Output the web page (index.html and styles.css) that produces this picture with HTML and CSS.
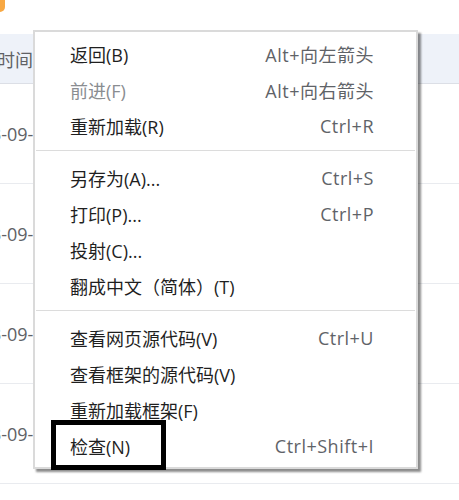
FILE: index.html
```html
<!DOCTYPE html>
<html lang="zh-CN">
<head>
<meta charset="utf-8">
<title>Context menu</title>
<link rel="stylesheet" href="styles.css">
</head>
<body>
<div class="page">
  <div class="topbar"><span class="badge"></span></div>
  <div class="table">
    <div class="thead"><span class="cell head-cell">提交时间</span></div>
    <div class="row"><span class="cell">2023-09-15 10:20</span></div>
    <div class="row"><span class="cell">2023-09-14 09:12</span></div>
    <div class="row"><span class="cell">2023-09-13 16:45</span></div>
    <div class="row"><span class="cell">2023-09-12 11:08</span></div>
  </div>

  <div class="menu">
    <div class="item"><span class="label">返回(B)</span><span class="key">Alt+向左箭头</span></div>
    <div class="item disabled"><span class="label">前进(F)</span><span class="key">Alt+向右箭头</span></div>
    <div class="item"><span class="label">重新加载(R)</span><span class="key">Ctrl+R</span></div>
    <div class="sep"></div>
    <div class="item"><span class="label">另存为(A)...</span><span class="key">Ctrl+S</span></div>
    <div class="item"><span class="label">打印(P)...</span><span class="key">Ctrl+P</span></div>
    <div class="item"><span class="label">投射(C)...</span></div>
    <div class="item"><span class="label">翻成中文（简体）(T)</span></div>
    <div class="sep"></div>
    <div class="item"><span class="label">查看网页源代码(V)</span><span class="key">Ctrl+U</span></div>
    <div class="item"><span class="label">查看框架的源代码(V)</span></div>
    <div class="item"><span class="label">重新加载框架(F)</span></div>
    <div class="item"><span class="label">检查(N)</span><span class="key">Ctrl+Shift+I</span></div>
  </div>
  <div class="highlight"></div>
</div>
</body>
</html>
```

FILE: styles.css
```css
html, body {
  margin: 0;
  padding: 0;
  background: #ffffff;
}
body {
  width: 459px;
  height: 500px;
  overflow: hidden;
  font-family: "Open Sans", "Noto Sans CJK SC", sans-serif;
}
.page {
  position: relative;
  width: 459px;
  height: 500px;
  overflow: hidden;
}
.topbar {
  height: 34px;
}
.badge {
  display: block;
  width: 5px;
  height: 12px;
  background: #f8a843;
  border-bottom-right-radius: 5px;
}
.table {
  display: flex;
  flex-direction: column;
}
.thead {
  height: 50px;
  background: #eef2f9;
  border-bottom: 1px solid #dcdfe6;
  box-sizing: border-box;
  display: flex;
  align-items: center;
}
.row {
  height: 100px;
  border-bottom: 1px solid #e9ebef;
  box-sizing: border-box;
  display: flex;
  align-items: center;
}
.cell {
  font-size: 18px;
  color: #606266;
  white-space: nowrap;
  margin-left: -40px;
}
.head-cell {
  margin-left: -39px;
  color: #5f6166;
}
.menu {
  position: absolute;
  left: 33px;
  top: 30px;
  width: 385px;
  box-sizing: border-box;
  background: #ffffff;
  border: 2px solid #dadada;
  box-shadow: 3px 3px 2px rgba(0, 0, 0, 0.45);
  padding: 4px 0 3px;
  display: flex;
  flex-direction: column;
}
.item {
  height: 36px;
  display: flex;
  align-items: center;
  justify-content: space-between;
  padding: 0 42px 0 35px;
  font-size: 18px;
  color: #1f1f1f;
  white-space: nowrap;
}
.item.disabled {
  color: #8a8d91;
}
.item.disabled .key {
  color: #5f6368;
}
.key {
  color: #5f6368;
  letter-spacing: 0.5px;
}
.sep {
  height: 1px;
  background: #dcdcdc;
  margin: 6px 1px 9px;
}
.highlight {
  position: absolute;
  left: 51px;
  top: 420px;
  width: 115px;
  height: 50px;
  box-sizing: border-box;
  border: 5px solid #000000;
}
```
